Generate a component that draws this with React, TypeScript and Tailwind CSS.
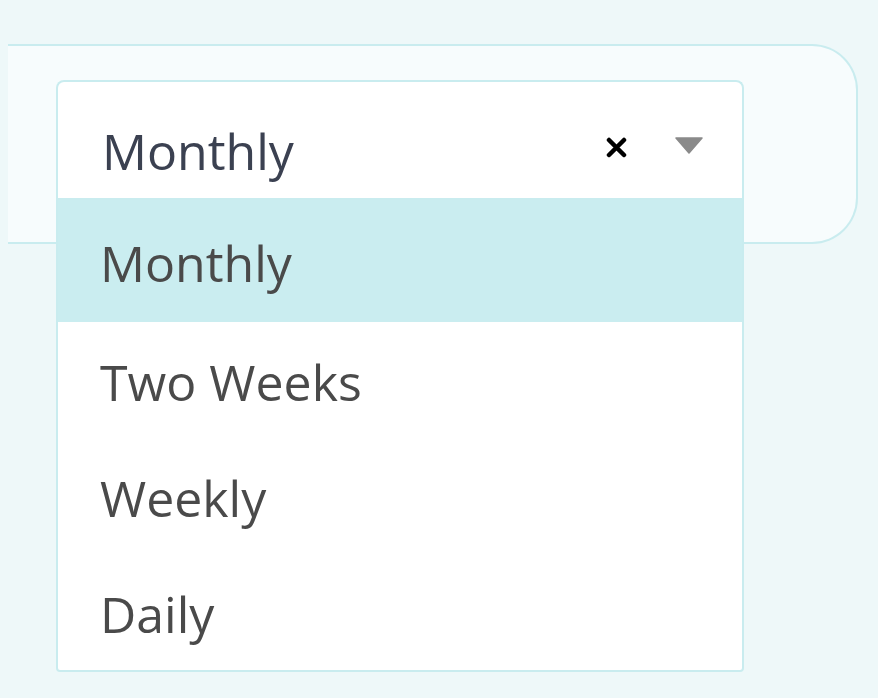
import React from "react";

const OPTIONS = ["Monthly", "Two Weeks", "Weekly", "Daily"];

export default function App() {
    const selected = "Monthly";

    return (
        <div
            className="w-[878px] h-[698px] overflow-hidden bg-[#eef8f9] pt-[44px] pl-[8px]"
            style={{ fontFamily: "'Open Sans', 'Noto Sans', sans-serif" }}
        >
            {/* filter panel */}
            <div className="w-[850px] h-[200px] border-2 border-l-0 border-[#c9ecef] rounded-r-[46px] bg-[#f7fcfd] pt-[34px] pl-[48px]">
                <div className="relative w-[688px]">
                    {/* select control */}
                    <div className="h-[118px] flex items-start border-2 border-b-0 border-[#c9ecef] rounded-t-[8px] bg-white pl-[44px] pr-[39px]">
                        <span className="flex-1 mt-[44px] text-[50px] leading-[50px] text-[#3b4151]">
                            {selected}
                        </span>
                        <svg className="mt-[55px]" width="23" height="21" viewBox="0 0 23 21">
                            <path d="M4 3 L19 18 M19 3 L4 18" stroke="#000" strokeWidth="4.5" strokeLinecap="round" />
                        </svg>
                        <svg className="mt-[55px] ml-[47px]" width="28" height="17" viewBox="0 0 28 17">
                            <path d="M1 1 H27 L14 16 Z" fill="#8a8a8a" stroke="#8a8a8a" strokeWidth="1.5" strokeLinejoin="round" />
                        </svg>
                    </div>

                    {/* dropdown menu */}
                    <div className="absolute left-0 top-[118px] w-full border-2 border-[#c9ecef] rounded-b-[4px] bg-white">
                        {OPTIONS.map((opt, i) => (
                            <div
                                key={opt}
                                className={
                                    i === 0
                                        ? "h-[122px] flex items-center pt-[3px] pl-[42px] bg-[#caedf0] text-[50px] leading-[50px] text-[#4a4a4a]"
                                        : "h-[116px] flex items-center pt-[3px] pl-[42px] text-[50px] leading-[50px] text-[#4a4a4a]"
                                }
                            >
                                {opt}
                            </div>
                        ))}
                    </div>
                </div>
            </div>
        </div>
    );
}
